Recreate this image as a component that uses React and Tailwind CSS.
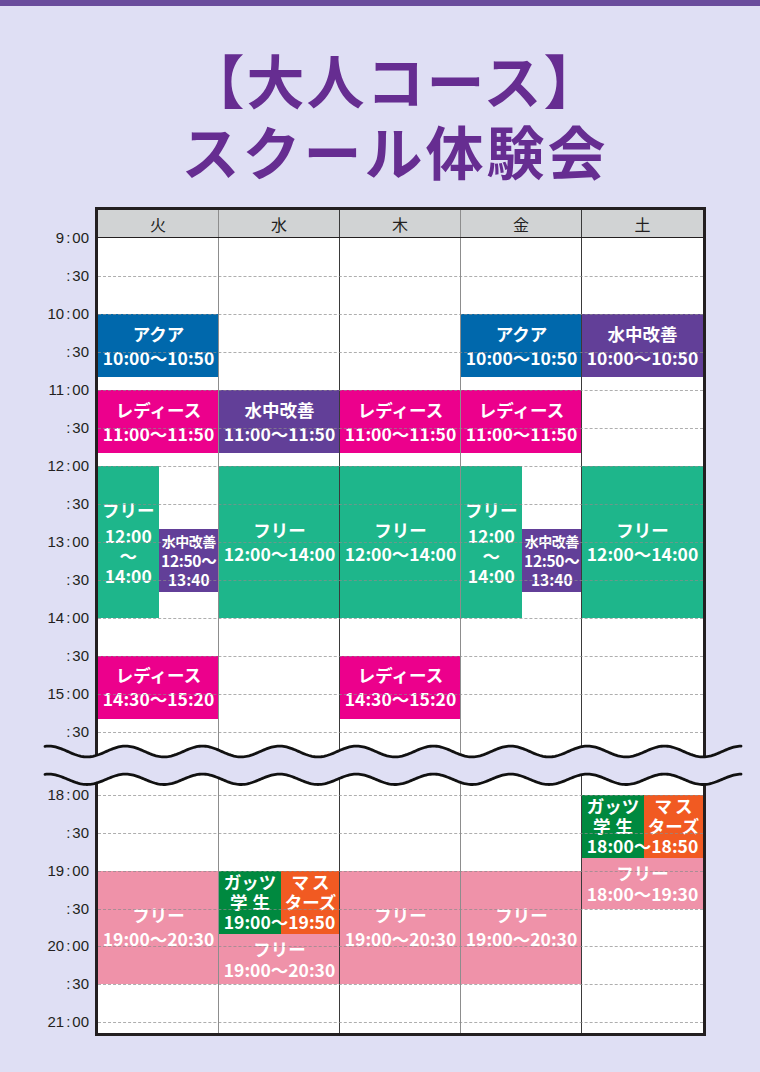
import React from "react";

const ROWS = "grid-rows-[repeat(39,12.6667px)_63px_repeat(18,12.6667px)_11px]";

const blue = "bg-[#0068ac]";
const pink = "bg-[#ec008c]";
const purple = "bg-[#623f98]";
const green = "bg-[#1eb68b]";
const rose = "bg-[#ef92a9]";

// upper + lower timetable blocks
const events = [
  // 火
  { cls: `row-start-7 row-end-12 col-start-1 col-end-3 ${blue}`, lines: ["アクア", "10:00〜10:50"] },
  { cls: `row-start-13 row-end-18 col-start-1 col-end-3 ${pink}`, lines: ["レディース", "11:00〜11:50"] },
  { cls: `row-start-19 row-end-31 col-start-1 col-end-2 ${green}`, narrow: true },
  { cls: `row-start-24 row-end-29 col-start-2 col-end-3 ${purple}`, small: ["水中改善", "12:50〜", "13:40"] },
  { cls: `row-start-34 row-end-39 col-start-1 col-end-3 ${pink}`, lines: ["レディース", "14:30〜15:20"] },
  { cls: `row-start-47 row-end-56 col-start-1 col-end-3 ${rose}`, lines: ["フリー", "19:00〜20:30"] },
  // 水
  { cls: `row-start-13 row-end-18 col-start-3 col-end-5 ${purple}`, lines: ["水中改善", "11:00〜11:50"] },
  { cls: `row-start-19 row-end-31 col-start-3 col-end-5 ${green}`, lines: ["フリー", "12:00〜14:00"] },
  { cls: `row-start-47 row-end-56 col-start-3 col-end-5 ${rose}`, lines: [] },
  // 木
  { cls: `row-start-13 row-end-18 col-start-5 col-end-7 ${pink}`, lines: ["レディース", "11:00〜11:50"] },
  { cls: `row-start-19 row-end-31 col-start-5 col-end-7 ${green}`, lines: ["フリー", "12:00〜14:00"] },
  { cls: `row-start-34 row-end-39 col-start-5 col-end-7 ${pink}`, lines: ["レディース", "14:30〜15:20"] },
  { cls: `row-start-47 row-end-56 col-start-5 col-end-7 ${rose}`, lines: ["フリー", "19:00〜20:30"] },
  // 金
  { cls: `row-start-7 row-end-12 col-start-7 col-end-9 ${blue}`, lines: ["アクア", "10:00〜10:50"] },
  { cls: `row-start-13 row-end-18 col-start-7 col-end-9 ${pink}`, lines: ["レディース", "11:00〜11:50"] },
  { cls: `row-start-19 row-end-31 col-start-7 col-end-8 ${green}`, narrow: true },
  { cls: `row-start-24 row-end-29 col-start-8 col-end-9 ${purple}`, small: ["水中改善", "12:50〜", "13:40"] },
  { cls: `row-start-47 row-end-56 col-start-7 col-end-9 ${rose}`, lines: ["フリー", "19:00〜20:30"] },
  // 土
  { cls: `row-start-7 row-end-12 col-start-9 col-end-11 ${purple}`, lines: ["水中改善", "10:00〜10:50"] },
  { cls: `row-start-19 row-end-31 col-start-9 col-end-11 ${green}`, lines: ["フリー", "12:00〜14:00"] },
  { cls: `row-start-41 row-end-50 col-start-9 col-end-11 ${rose}`, lines: [] },
];

const combos = [
  { cls: "row-start-47 row-end-52 col-start-3 col-end-5", time: "19:00〜19:50" },
  { cls: "row-start-41 row-end-46 col-start-9 col-end-11", time: "18:00〜18:50" },
];

const freeTexts = [
  { cls: "row-start-52 row-end-56 col-start-3 col-end-5", time: "19:00〜20:30" },
  { cls: "row-start-46 row-end-50 col-start-9 col-end-11", time: "18:00〜19:30" },
];

const dashed = [
  "row-start-4", "row-start-7", "row-start-10", "row-start-13", "row-start-16",
  "row-start-19", "row-start-22", "row-start-25", "row-start-28", "row-start-31",
  "row-start-34", "row-start-37", "row-start-40",
  "row-start-41", "row-start-44", "row-start-47", "row-start-50", "row-start-53",
  "row-start-56", "row-start-59",
];

const labels = [
  ["row-start-1", "9:00"], ["row-start-4", ":30"], ["row-start-7", "10:00"], ["row-start-10", ":30"],
  ["row-start-13", "11:00"], ["row-start-16", ":30"], ["row-start-19", "12:00"], ["row-start-22", ":30"],
  ["row-start-25", "13:00"], ["row-start-28", ":30"], ["row-start-31", "14:00"], ["row-start-34", ":30"],
  ["row-start-37", "15:00"], ["row-start-40", ":30"],
  ["row-start-41", "18:00"], ["row-start-44", ":30"], ["row-start-47", "19:00"], ["row-start-50", ":30"],
  ["row-start-53", "20:00"], ["row-start-56", ":30"], ["row-start-59", "21:00"],
];

const days = [
  { d: "火", cls: "border-r border-[#8d8d8d]" },
  { d: "水", cls: "border-r border-[#3a3a3a]" },
  { d: "木", cls: "border-r border-[#8d8d8d]" },
  { d: "金", cls: "border-r border-[#3a3a3a]" },
  { d: "土", cls: "" },
];

// column lines sit above the blocks, as in the print
const dividers = [
  "col-start-1 col-end-3 border-r border-[#8d8d8d]",
  "col-start-3 col-end-5 border-r border-[#3a3a3a]",
  "col-start-5 col-end-7 border-r border-[#8d8d8d]",
  "col-start-7 col-end-9 border-r border-[#3a3a3a]",
];

function TimeLabel({ text }) {
  const [h, m] = text.split(":");
  return (
    <span>
      {h}
      <span className="mx-[2px]">:</span>
      {m}
    </span>
  );
}

function wave(y0, amp) {
  const pts = [];
  for (let x = 45; x <= 742; x += 1.5) {
    const y = y0 + amp * Math.cos((2 * Math.PI * (x - 87)) / 77);
    pts.push([x, y]);
  }
  return pts;
}

function Waves() {
  const top = wave(21.5, 5.4);
  const bottom = wave(49.3, 5.2);
  const toD = (pts) => pts.map((p, i) => `${i ? "L" : "M"}${p[0].toFixed(1)} ${p[1].toFixed(2)}`).join(" ");
  const fill =
    toD(top) +
    " " +
    bottom
      .slice()
      .reverse()
      .map((p) => `L${p[0].toFixed(1)} ${p[1].toFixed(2)}`)
      .join(" ") +
    " Z";
  return (
    <svg className="absolute left-0 top-[730px] pointer-events-none" width="760" height="70" viewBox="0 0 760 70">
      <path d={fill} fill="#dfdff4" />
      <path d={toD(top)} fill="none" stroke="#111" strokeWidth="2.8" strokeLinecap="round" />
      <path d={toD(bottom)} fill="none" stroke="#111" strokeWidth="2.8" strokeLinecap="round" />
    </svg>
  );
}

export default function App() {
  return (
    <div className="relative w-[760px] min-h-[1072px] bg-[#dfdff4] font-['Noto_Sans_CJK_JP',sans-serif] text-[#231f20]">
      <div className="h-[6px] bg-[#6a4c9c]" />

      {/* Title */}
      <div className="mt-[38px] pl-[30px] text-center font-bold text-[#662d91] text-[58px] leading-[71px]">
        <div className="tracking-[2px]">【大人コース】</div>
        <div className="tracking-[3px]">スクール体験会</div>
      </div>

      {/* Timetable */}
      <div className="mt-[21px] flex">
        <div className={`w-[95px] pr-[6px] mt-[31px] grid ${ROWS} font-['Liberation_Sans',Arial,sans-serif] text-[15px] text-[#231f20]`}>
          {labels.map(([cls, t]) => (
            <div key={cls} className={`${cls} col-start-1 self-start h-[18px] leading-[18px] -translate-y-1/2 text-right`}>
              <TimeLabel text={t} />
            </div>
          ))}
        </div>

        <div className="w-[611px] border-[3px] border-[#231f20] bg-white">
          <div className="grid grid-cols-5 h-[28px] bg-[#d1d3d4] border-b border-[#231f20]">
            {days.map((x) => (
              <div key={x.d} className={`${x.cls} flex items-center justify-center text-[16px] leading-none`}>
                {x.d}
              </div>
            ))}
          </div>

          <div className={`grid grid-cols-10 ${ROWS}`}>
            {events.map((e, i) => (
              <div
                key={i}
                className={`${e.cls} flex flex-col items-center justify-center text-white font-bold text-center`}
              >
                {e.lines &&
                  e.lines.map((l) => (
                    <div key={l} className="text-[17.5px] leading-[24px] whitespace-nowrap">
                      {l}
                    </div>
                  ))}
                {e.narrow && (
                  <>
                    <div className="text-[17.5px] leading-[24px] mb-[4px]">フリー</div>
                    <div className="text-[17.5px] leading-[20px]">12:00</div>
                    <div className="text-[17.5px] leading-[20px]">〜</div>
                    <div className="text-[17.5px] leading-[20px]">14:00</div>
                  </>
                )}
                {e.small && (
                  <>
                    <div className="text-[14px] leading-[19px] tracking-[-0.5px] whitespace-nowrap">{e.small[0]}</div>
                    <div className="text-[15.5px] leading-[19px] tracking-[-0.3px] whitespace-nowrap">{e.small[1]}</div>
                    <div className="text-[15.5px] leading-[19px] whitespace-nowrap">{e.small[2]}</div>
                  </>
                )}
              </div>
            ))}

            {combos.map((c) => (
              <div
                key={c.cls}
                className={`${c.cls} grid grid-cols-[62fr_59fr] content-center bg-[linear-gradient(to_right,#00893f_51.3%,#f15a22_51.3%)] text-white font-bold text-[17.5px] leading-[20px] text-center`}
              >
                <div>
                  <div>ガッツ</div>
                  <div className="tracking-[5px] pl-[5px]">学生</div>
                </div>
                <div>
                  <div className="tracking-[3px] pl-[3px]">マス</div>
                  <div>ターズ</div>
                </div>
                <div className="col-span-2 whitespace-nowrap">{c.time}</div>
              </div>
            ))}

            {freeTexts.map((f) => (
              <div key={f.cls} className={`${f.cls} flex flex-col items-center justify-center text-white font-bold`}>
                <div className="text-[17.5px] leading-[21px]">フリー</div>
                <div className="text-[17.5px] leading-[21px] whitespace-nowrap">{f.time}</div>
              </div>
            ))}

            {dividers.map((c) => (
              <div key={c} className={`${c} row-start-1 row-end-60`} />
            ))}

            {dashed.map((r) => (
              <div
                key={r}
                className={`${r} col-start-1 col-end-11 self-start border-t border-dashed border-[rgba(140,140,140,0.7)]`}
              />
            ))}
          </div>
        </div>
      </div>

      <Waves />
    </div>
  );
}
